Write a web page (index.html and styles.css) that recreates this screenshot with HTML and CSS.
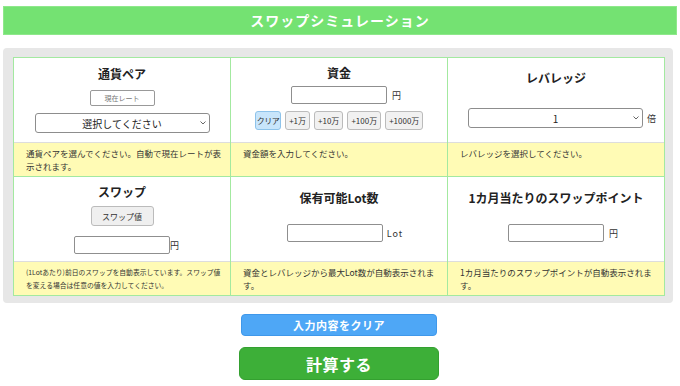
FILE: index.html
```html
<!DOCTYPE html>
<html lang="ja">
<head>
    <meta charset="UTF-8">
    <meta name="viewport" content="width=device-width, initial-scale=1.0">
    <title>スワップシミュレーション</title>
    <link rel="stylesheet" href="styles.css">
</head>
<body>
    <div class="page">
        <h1 class="title-bar">スワップシミュレーション</h1>

        <div class="panel">
            <div class="grid">
                <!-- 通貨ペア -->
                <div class="cell">
                    <div class="cell-top pair">
                        <h2>通貨ペア</h2>
                        <input type="text" class="rate" placeholder="現在レート" readonly>
                        <div class="select-wrap">
                            <select class="pick">
                                <option>選択してください</option>
                            </select>
                            <svg class="chev" width="6" height="4" viewBox="0 0 6 4"><polyline points="0.5,0.5 3,3 5.5,0.5" fill="none" stroke="#555" stroke-width="0.9"/></svg>
                        </div>
                    </div>
                    <p class="note">通貨ペアを選んでください。自動で現在レートが表示されます。</p>
                </div>

                <!-- 資金 -->
                <div class="cell">
                    <div class="cell-top fund">
                        <h2>資金</h2>
                        <div class="unit-row">
                            <input type="text" class="num">
                            <span class="unit yen">円</span>
                        </div>
                        <div class="chips">
                            <button class="chip clear">クリア</button>
                            <button class="chip">+1万</button>
                            <button class="chip">+10万</button>
                            <button class="chip">+100万</button>
                            <button class="chip">+1000万</button>
                        </div>
                    </div>
                    <p class="note">資金額を入力してください。</p>
                </div>

                <!-- レバレッジ -->
                <div class="cell">
                    <div class="cell-top lev">
                        <h2>レバレッジ</h2>
                        <div class="unit-row">
                            <div class="select-wrap">
                                <select class="pick">
                                    <option>1</option>
                                </select>
                                <svg class="chev" width="6" height="4" viewBox="0 0 6 4"><polyline points="0.5,0.5 3,3 5.5,0.5" fill="none" stroke="#555" stroke-width="0.9"/></svg>
                            </div>
                            <span class="unit bai">倍</span>
                        </div>
                    </div>
                    <p class="note">レバレッジを選択してください。</p>
                </div>

                <!-- スワップ -->
                <div class="cell">
                    <div class="cell-top swap">
                        <h2>スワップ</h2>
                        <button class="swap-btn">スワップ値</button>
                        <div class="unit-row">
                            <input type="text" class="num">
                            <span class="unit tight">円</span>
                        </div>
                    </div>
                    <p class="note small">(1Lotあたり)前日のスワップを自動表示しています。スワップ値を変える場合は任意の値を入力してください。</p>
                </div>

                <!-- 保有可能Lot数 -->
                <div class="cell">
                    <div class="cell-top lot">
                        <h2>保有可能Lot数</h2>
                        <div class="unit-row">
                            <input type="text" class="num">
                            <span class="unit lot-unit">Lot</span>
                        </div>
                    </div>
                    <p class="note">資金とレバレッジから最大Lot数が自動表示されます。</p>
                </div>

                <!-- 1カ月当たり -->
                <div class="cell">
                    <div class="cell-top month">
                        <h2>1カ月当たりのスワップポイント</h2>
                        <div class="unit-row">
                            <input type="text" class="num">
                            <span class="unit yen">円</span>
                        </div>
                    </div>
                    <p class="note narrow">1カ月当たりのスワップポイントが自動表示されます。</p>
                </div>
            </div>
        </div>

        <div class="actions">
            <button class="btn-clear">入力内容をクリア</button>
            <button class="btn-calc">計算する</button>
        </div>
    </div>
</body>
</html>
```

FILE: styles.css
```css
*{
    margin: 0;
    padding: 0;
    box-sizing: border-box;
}
body{
    font-family: "Noto Sans CJK JP", "Liberation Sans", sans-serif;
    color: #222;
    background: #fff;
}
.page{
    width: 674px;
    margin-left: 3px;
    padding-top: 6px;
}

.title-bar{
    height: 29px;
    background-color: #74e272;
    border: 1px solid #8ee88b;
    color: #fff;
    font-size: 14px;
    font-weight: bold;
    letter-spacing: 1px;
    line-height: 27px;
    text-align: center;
}

.panel{
    width: 670px;
    margin-top: 13px;
    padding: 9px 8px 7px 10px;
    background-color: #e7e7e7;
    border-radius: 4px;
}

.grid{
    display: grid;
    grid-template-columns: repeat(3, 1fr);
    gap: 1px;
    background-color: #a3e9a0;
    border: 1px solid #a3e9a0;
}

.cell{
    background: #fff;
    display: flex;
    flex-direction: column;
}

.cell-top{
    height: 85px;
    border-bottom: 1px solid #dddddd;
    display: flex;
    flex-direction: column;
    align-items: center;
}
.cell-top h2{
    font-size: 12px;
    line-height: 16px;
    font-weight: bold;
    color: #222;
}

.pair{ padding-top: 8px; }
.fund{ padding-top: 7px; }
.lev{ padding-top: 12px; }
.swap{ padding-top: 7px; }
.lot, .month{ padding-top: 13px; }

.note{
    height: 33px;
    background-color: #fffbb5;
    padding: 4px 7.5px 0 12px;
    font-size: 8.5px;
    line-height: 13px;
    color: #333;
}
.note.small{
    font-size: 6.8px;
}
.note.narrow{
    padding-right: 12px;
}

/* 入力欄 */
.num{
    width: 96px;
    height: 18px;
    border: 1px solid #8f8f8f;
    border-radius: 2px;
    background: #fff;
}
.rate{
    width: 65px;
    height: 16px;
    margin-top: 8px;
    border: 1px solid #999;
    border-radius: 2px;
    font-family: inherit;
    font-size: 7px;
    text-align: center;
    background: #fff;
}
.rate::placeholder{
    color: #777;
}

.select-wrap{
    position: relative;
    width: 175px;
    height: 20px;
}
.pair .select-wrap{
    margin-top: 7px;
}
.pick{
    display: block;
    appearance: none;
    -webkit-appearance: none;
    width: 100%;
    height: 100%;
    border: 1px solid #8d8d8d;
    border-radius: 3px;
    background: #fff;
    font-family: inherit;
    font-size: 10px;
    color: #222;
    text-align: center;
    text-align-last: center;
    padding: 0 12px;
}
.chev{
    position: absolute;
    right: 4px;
    top: 8px;
}

.unit-row{
    display: flex;
    align-items: center;
    justify-content: center;
}
.fund .unit-row{ margin-top: 5px; }
.lev .unit-row{ margin-top: 22px; }
.swap .unit-row{ margin-top: 10px; }
.lot .unit-row, .month .unit-row{ margin-top: 18px; }

.unit{
    font-size: 9px;
    color: #333;
}
.unit.yen{
    margin-left: 5px;
    margin-right: -14px;
}
.unit.bai{
    margin-left: 4px;
    margin-right: -12px;
}
.unit.tight{
    margin-right: -9px;
}
.unit.lot-unit{
    margin-left: 4px;
    margin-right: -12px;
    letter-spacing: 1px;
}

/* 金額ボタン */
.chips{
    display: flex;
    gap: 4px;
    margin-top: 7px;
}
.chip{
    height: 19px;
    padding: 0 3px;
    border: 1px solid #bbb;
    border-radius: 3px;
    background-color: #f1f1f1;
    font-family: inherit;
    font-size: 8px;
    color: #333;
}
.chip.clear{
    padding: 0 1px;
    letter-spacing: -0.5px;
    background-color: #c8e5fb;
    border-color: #8ec3ea;
}

.swap-btn{
    width: 63px;
    height: 20px;
    margin-top: 6px;
    border: 1px solid #bbb;
    border-radius: 3px;
    background-color: #efefef;
    font-family: inherit;
    font-size: 8px;
    color: #333;
}

/* 下のボタン */
.actions{
    width: 672px;
    margin-top: 11px;
    display: flex;
    flex-direction: column;
    align-items: center;
    gap: 11px;
}
.btn-clear{
    width: 196px;
    height: 22px;
    border: 1px solid #3f98ea;
    border-radius: 4px;
    background-color: #4ea7f6;
    color: #fff;
    font-family: inherit;
    font-size: 11px;
    font-weight: bold;
    letter-spacing: 0.5px;
}
.btn-calc{
    width: 200px;
    height: 33px;
    border: 1px solid #34a030;
    border-radius: 6px;
    background-color: #3daf38;
    color: #fff;
    font-family: inherit;
    font-size: 16px;
    font-weight: bold;
    letter-spacing: 0.5px;
}
```
